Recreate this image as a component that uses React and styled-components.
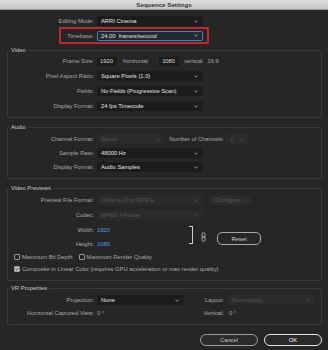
import styled, { createGlobalStyle } from "styled-components";

const GlobalStyle = createGlobalStyle`
  html, body {
    margin: 0;
    padding: 0;
    background: #262626;
  }
  body {
    width: 328px;
    height: 350px;
    overflow: hidden;
    font-family: "Liberation Sans", Arial, sans-serif;
    -webkit-font-smoothing: antialiased;
  }
`;

const Window = styled.div`
  width: 328px;
  height: 350px;
  background: #262626;
  display: flex;
  flex-direction: column;
  font-size: 5.8px;
  color: #a9a9a9;
`;

const TitleBar = styled.div`
  height: 10px;
  line-height: 10px;
  flex: none;
  text-align: center;
  background: linear-gradient(#dcdcdc, #c6c6c6);
  border-bottom: 1px solid #a0a0a0;
  box-sizing: border-box;
  color: #353535;
  font-weight: 700;
  font-size: 6.2px;
`;

const Body = styled.div`
  padding: 5px 6px 0 7px;
  display: flex;
  flex-direction: column;
`;

const Row = styled.div`
  display: flex;
  align-items: center;
  height: ${(p) => p.$h || 14}px;
  padding-left: ${(p) => p.$pl || 0}px;
`;

const Label = styled.span`
  flex: none;
  width: ${(p) => p.$w || 86}px;
  margin-right: ${(p) => (p.$mr ?? 3)}px;
  text-align: right;
  white-space: nowrap;
  color: #a9a9a9;
`;

const Highlight = styled.div`
  display: flex;
  align-items: center;
  margin-left: 52px;
  width: 150px;
  height: 17px;
  box-sizing: border-box;
  border: 2px solid #c3262b;
  border-radius: 1px;
`;

const Dropdown = styled.div`
  flex: none;
  width: ${(p) => p.$w || 106}px;
  height: 10px;
  box-sizing: border-box;
  display: flex;
  align-items: center;
  justify-content: space-between;
  padding: 0 4px 0 3px;
  border-radius: 1.5px;
  background: ${(p) => (p.$focus ? "#222a34" : p.$disabled ? "#2b2b2b" : "#1c1c1c")};
  border: 1px solid ${(p) => (p.$focus ? "#4c7fb3" : p.$disabled ? "#2b2b2b" : "#1c1c1c")};
  color: ${(p) => (p.$disabled ? "#575757" : "#e4e4e4")};
  white-space: nowrap;
`;

const NumBox = styled.span`
  flex: none;
  width: 20px;
  height: 9px;
  line-height: 9px;
  padding-left: 3px;
  box-sizing: border-box;
  background: #1b1b1b;
  color: #dedede;
  margin-right: ${(p) => p.$mr || 0}px;
`;

const Text = styled.span`
  white-space: nowrap;
  color: ${(p) => (p.$blue ? "#4d9de6" : p.$value ? "#d8d8d8" : "#a9a9a9")};
  margin-right: ${(p) => p.$mr || 0}px;
`;

const Value = styled(Text)`
  flex: none;
  width: ${(p) => p.$w || "auto"};
`;

const Group = styled.fieldset`
  margin: ${(p) => p.$mt || 0}px 0 0 0;
  padding: ${(p) => p.$pt || 0}px 0 ${(p) => p.$pb || 0}px 0;
  border: 1px solid #3a3a3a;
  border-radius: 2px;
  min-width: 0;
`;

const Legend = styled.legend`
  margin-left: 1px;
  padding: 0 2px;
  line-height: 7px;
  color: #c9c9c9;
`;

const SmallButton = styled.span`
  flex: none;
  width: ${(p) => p.$w || 42}px;
  height: ${(p) => p.$h || 9}px;
  box-sizing: border-box;
  display: flex;
  align-items: center;
  justify-content: center;
  border-radius: 5px;
  margin-left: ${(p) => p.$ml || 0}px;
  margin-top: ${(p) => p.$mt || 0}px;
  background: ${(p) => (p.$disabled ? "#2d2d2d" : "#262626")};
  border: 1px solid ${(p) => (p.$disabled ? "#2d2d2d" : "#a8a8a8")};
  color: ${(p) => (p.$disabled ? "#5a5a5a" : "#cfcfcf")};
`;

const DimGroup = styled.div`
  display: flex;
`;

const DimRows = styled.div`
  width: 181px;
  flex: none;
`;

const Bracket = styled.span`
  flex: none;
  width: 3px;
  height: 16px;
  margin-top: 4px;
  border: 1.5px solid #cfcfcf;
  border-left: none;
`;

const Chain = styled.svg`
  flex: none;
  margin: 10px 0 0 8px;
`;

const CheckRow = styled.div`
  display: flex;
  align-items: center;
  height: 12px;
  padding-left: 6px;
`;

const Check = styled.span`
  flex: none;
  width: 6px;
  height: 6px;
  box-sizing: border-box;
  border: 1px solid #9a9a9a;
  border-radius: 1px;
  margin-right: 2px;
  margin-left: ${(p) => p.$ml || 0}px;
  background: ${(p) => (p.$on ? "#c8c8c8" : "#222")};
  display: flex;
  align-items: center;
  justify-content: center;
`;

const Footer = styled.div`
  display: flex;
  justify-content: flex-end;
  gap: 6px;
  margin-top: 9px;
`;

const DialogButton = styled.span`
  width: 58px;
  height: 12px;
  box-sizing: border-box;
  display: flex;
  align-items: center;
  justify-content: center;
  border-radius: 6px;
  background: #2a2a2a;
  border: 1px solid ${(p) => (p.$primary ? "#e6e6e6" : "#9c9c9c")};
  color: ${(p) => (p.$primary ? "#f2f2f2" : "#c9c9c9")};
`;

const Chevron = ({ color = "#bdbdbd" }) => (
  <svg width="4" height="3" viewBox="0 0 4 3">
    <path d="M0.5 0.8 L2 2.2 L3.5 0.8" fill="none" stroke={color} strokeWidth="0.8" />
  </svg>
);

const Select = ({ children, disabled, focus, w }) => (
  <Dropdown $disabled={disabled} $focus={focus} $w={w}>
    <span>{children}</span>
    <Chevron color={disabled ? "#4f4f4f" : "#bdbdbd"} />
  </Dropdown>
);

export default function App() {
  return (
    <>
      <GlobalStyle />
      <Window>
        <TitleBar>Sequence Settings</TitleBar>
        <Body>
          <Row $h={12}>
            <Label $w={87}>Editing Mode:</Label>
            <Select>ARRI Cinema</Select>
          </Row>
          <Highlight>
            <Label $w={33}>Timebase:</Label>
            <Select focus>24.00&nbsp; frames/second</Select>
          </Highlight>

          <Group $mt={2.5} $pb={3}>
            <Legend>Video</Legend>
            <Row $h={15}>
              <Label>Frame Size:</Label>
              <NumBox $mr={6}>1920</NumBox>
              <Text $mr={11}>horizontal</Text>
              <NumBox $mr={5}>1080</NumBox>
              <Text $mr={5}>vertical</Text>
              <Text>16:9</Text>
            </Row>
            <Row $h={15}>
              <Label>Pixel Aspect Ratio:</Label>
              <Select>Square Pixels (1.0)</Select>
            </Row>
            <Row $h={15}>
              <Label>Fields:</Label>
              <Select>No Fields (Progressive Scan)</Select>
            </Row>
            <Row $h={15}>
              <Label>Display Format:</Label>
              <Select>24 fps Timecode</Select>
            </Row>
          </Group>

          <Group $mt={6} $pt={1.5} $pb={3.5}>
            <Legend>Audio</Legend>
            <Row>
              <Label>Channel Format:</Label>
              <Select disabled w={68}>Stereo</Select>
              <Label $w={59} $mr={2}>Number of Channels:</Label>
              <Select disabled w={23}>2</Select>
            </Row>
            <Row>
              <Label>Sample Rate:</Label>
              <Select>48000 Hz</Select>
            </Row>
            <Row>
              <Label>Display Format:</Label>
              <Select>Audio Samples</Select>
            </Row>
          </Group>

          <Group $mt={6} $pt={1.5} $pb={4.5}>
            <Legend>Video Previews</Legend>
            <Row>
              <Label>Preview File Format:</Label>
              <Select disabled>I-Frame Only MPEG</Select>
              <SmallButton $disabled $ml={6}>Configure...</SmallButton>
            </Row>
            <Row $h={15}>
              <Label>Codec:</Label>
              <Select disabled>MPEG I-Frame</Select>
            </Row>
            <DimGroup>
              <DimRows>
                <Row $h={15}>
                  <Label>Width:</Label>
                  <Text $blue>1920</Text>
                </Row>
                <Row>
                  <Label>Height:</Label>
                  <Text $blue>1080</Text>
                </Row>
              </DimRows>
              <Bracket />
              <Chain width="5" height="10" viewBox="0 0 5 10">
                <rect x="1" y="0.6" width="3" height="5" rx="1.5" fill="none" stroke="#bdbdbd" strokeWidth="0.8" />
                <rect x="1" y="4.4" width="3" height="5" rx="1.5" fill="none" stroke="#bdbdbd" strokeWidth="0.8" />
              </Chain>
              <SmallButton $w={44} $h={13} $ml={11} $mt={10}>Reset</SmallButton>
            </DimGroup>
            <CheckRow>
              <Check />
              <Text>Maximum Bit Depth</Text>
              <Check $ml={6} />
              <Text>Maximum Render Quality</Text>
            </CheckRow>
            <CheckRow>
              <Check $on>
                <svg width="4" height="4" viewBox="0 0 4 4">
                  <path d="M0.5 2 L1.6 3 L3.5 0.8" fill="none" stroke="#222" strokeWidth="0.9" />
                </svg>
              </Check>
              <Text>Composite in Linear Color (requires GPU acceleration or max render quality)</Text>
            </CheckRow>
          </Group>

          <Group $mt={4} $pt={1.5} $pb={5.5}>
            <Legend>VR Properties</Legend>
            <Row>
              <Label>Projection:</Label>
              <Select w={87}>None</Select>
              <Label $w={40} $mr={4}>Layout:</Label>
              <Select disabled w={87}>Monoscopic</Select>
            </Row>
            <Row $h={11}>
              <Label>Horizontal Captured View:</Label>
              <Value $w="87px">0 °</Value>
              <Label $w={40} $mr={5}>Vertical:</Label>
              <Text>0 °</Text>
            </Row>
          </Group>

          <Footer>
            <DialogButton>Cancel</DialogButton>
            <DialogButton $primary>OK</DialogButton>
          </Footer>
        </Body>
      </Window>
    </>
  );
}
